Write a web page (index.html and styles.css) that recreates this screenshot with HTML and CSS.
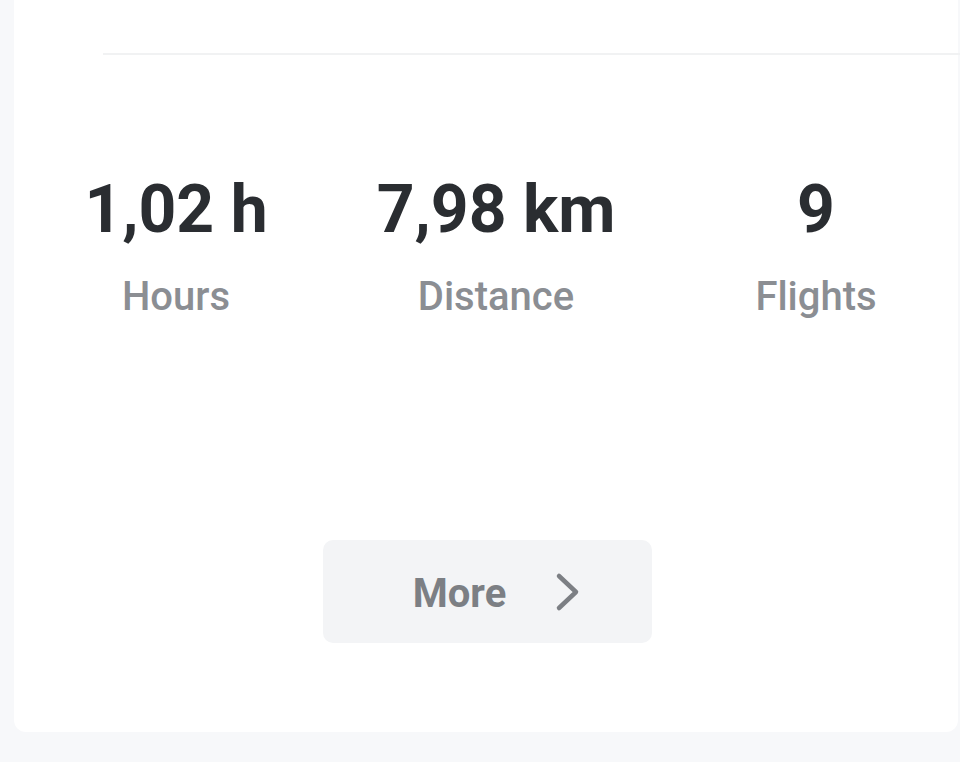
FILE: index.html
```html
<!DOCTYPE html>
<html lang="en">
<head>
<meta charset="utf-8">
<title>Flight summary</title>
<link rel="stylesheet" href="styles.css">
</head>
<body>
  <section class="card">
    <div class="divider"></div>
    <div class="stats">
      <div class="stat">
        <div class="stat-value">1,02 h</div>
        <div class="stat-label">Hours</div>
      </div>
      <div class="stat">
        <div class="stat-value">7,98 km</div>
        <div class="stat-label">Distance</div>
      </div>
      <div class="stat">
        <div class="stat-value">9</div>
        <div class="stat-label">Flights</div>
      </div>
    </div>
    <div class="actions">
      <button class="more-btn" type="button">
        <span class="more-text">More</span>
        <svg class="chevron" width="28" height="40" viewBox="0 0 28 40" aria-hidden="true">
          <path d="M5 4 L22 20 L5 36" fill="none" stroke="#7c7f84" stroke-width="4.5" stroke-linecap="round" stroke-linejoin="round"/>
        </svg>
      </button>
    </div>
  </section>
</body>
</html>
```
FILE: styles.css
```css
html, body {
  margin: 0;
  padding: 0;
}

body {
  background: #f7f8fa;
  width: 960px;
  height: 762px;
  overflow: hidden;
  font-family: Roboto, "Liberation Sans", Arial, sans-serif;
}

.card {
  margin-left: 14px;
  width: 944px;
  height: 732px;
  background: #ffffff;
  border-radius: 0 0 12px 12px;
  padding-top: 53px;
  box-sizing: border-box;
}

.divider {
  margin-left: 89px;
  margin-right: -2px;
  height: 2px;
  background: #f1f2f3;
}

.stats {
  display: grid;
  grid-template-columns: 320px 320px 320px;
  margin-left: 2px;
  padding-top: 122px;
}

.stat {
  display: flex;
  flex-direction: column;
  align-items: center;
}

.stat-value {
  font-size: 66px;
  line-height: 66px;
  font-weight: 700;
  color: #2a2d31;
}

.stat-label {
  margin-top: 34px;
  font-size: 40px;
  line-height: 40px;
  font-weight: 500;
  color: #8b8e93;
}

.actions {
  padding-top: 223px;
  padding-left: 309px;
}

.more-btn {
  width: 329px;
  height: 103px;
  border: none;
  border-radius: 10px;
  background: #f3f4f6;
  display: flex;
  align-items: center;
  justify-content: center;
  gap: 48px;
  padding: 5px 0 0 20px;
  font-family: inherit;
  cursor: pointer;
}

.more-text {
  font-size: 40px;
  font-weight: 700;
  color: #7c7f84;
  line-height: 40px;
}

.chevron {
  display: block;
  margin-top: -4px;
}
```
